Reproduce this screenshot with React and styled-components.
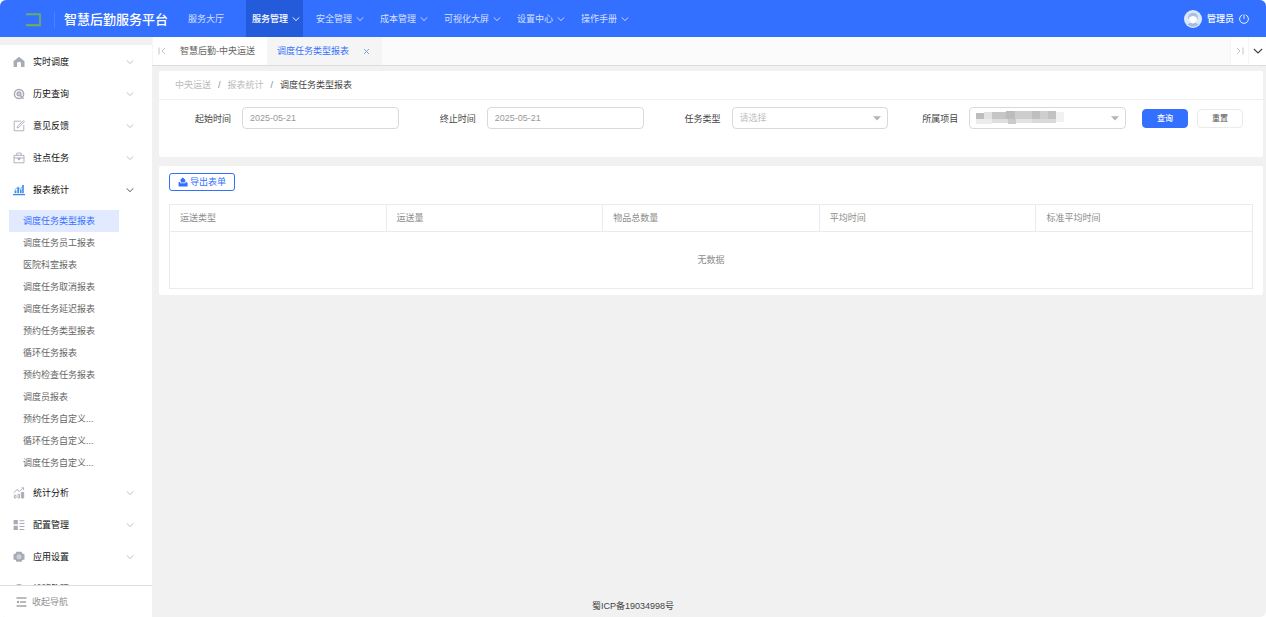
import React from "react";
import styled, { createGlobalStyle } from "styled-components";

const GlobalStyle = createGlobalStyle`
  *, *::before, *::after { box-sizing: border-box; }
  body {
    margin: 0;
    background: #fff;
    color: #333;
    font: 9px/14px "Liberation Sans", "Noto Sans CJK SC", sans-serif;
  }
  button, input, select { font: inherit; margin: 0; }
  button { cursor: pointer; }
  a { color: inherit; text-decoration: none; }
  ul { list-style: none; margin: 0; padding: 0; }
`;

const BLUE = "#3370ff";
const SIDEBAR = "152px";

const Page = styled.div`
  display: flex;
  flex-direction: column;
  height: 100vh;
  border-radius: 6px;
  overflow: hidden;
  background: #f1f1f1;
`;

/* ---------- header ---------- */

const Header = styled.header`
  display: flex;
  align-items: stretch;
  height: 37px;
  flex: none;
  padding: 0 17px 0 24px;
  background: ${BLUE};
  color: #fff;
`;

const Brand = styled.div`
  display: flex;
  align-items: center;
  padding-top: 2px;
  margin-right: 14px;
`;

const BrandDivider = styled.span`
  width: 1px;
  height: 16px;
  margin: 0 9px 0 11px;
  background: rgba(255, 255, 255, 0.12);
`;

const BrandName = styled.h1`
  margin: 0;
  font-size: 13px;
  line-height: 20px;
  font-weight: 500;
  white-space: nowrap;
`;

const TopNav = styled.nav`
  display: flex;
  gap: 7px;
  flex: 1;
`;

const TopLink = styled.a`
  display: flex;
  align-items: center;
  gap: 4px;
  min-width: 57px;
  padding: 0 3px 0 6px;
  white-space: nowrap;
  font-weight: ${(p) => (p.$active ? 500 : 400)};
  color: ${(p) => (p.$active ? "#fff" : "rgba(255, 255, 255, 0.8)")};
  background: ${(p) => (p.$active ? "#245bdb" : "transparent")};
`;

const Account = styled.div`
  display: flex;
  align-items: center;
  gap: 5px;
  font-weight: 500;
  white-space: nowrap;
`;

const PlainButton = styled.button`
  display: flex;
  align-items: center;
  justify-content: center;
  padding: 0;
  border: 0;
  background: transparent;
  color: inherit;
`;

/* ---------- sidebar ---------- */

const Body = styled.div`
  display: flex;
  flex: 1;
  min-height: 0;
`;

const Sidebar = styled.aside`
  display: flex;
  flex-direction: column;
  flex: none;
  width: ${SIDEBAR};
  padding-top: 8px;
`;

const Menu = styled.ul`
  flex: 1;
  min-height: 0;
  padding-top: 1px;
  overflow: hidden;
  background: #fff;
`;

const GroupButton = styled.button`
  display: flex;
  align-items: center;
  gap: 8px;
  width: 100%;
  height: 32px;
  padding: 0 18px 0 13px;
  border: 0;
  background: transparent;
  color: #111;
  text-align: left;
`;

const GroupLabel = styled.span`
  flex: 1;
`;

const SubMenu = styled.ul`
  padding: 4px 33px 3px 9px;
`;

const SubLink = styled.a`
  display: block;
  padding-left: 14px;
  line-height: 22px;
  white-space: nowrap;
  color: ${(p) => (p.$active ? BLUE : "#666")};
  background: ${(p) => (p.$active ? "#e1eaff" : "transparent")};
`;

const Collapse = styled.button`
  display: flex;
  align-items: center;
  gap: 5px;
  flex: none;
  height: 32px;
  padding: 0 16px;
  border: 0;
  border-top: 1px solid #ddd;
  background: #fff;
  color: #8f8f8f;
`;

/* ---------- tabs ---------- */

const Main = styled.main`
  display: flex;
  flex-direction: column;
  flex: 1;
  min-width: 0;
`;

const TabBar = styled.div`
  display: flex;
  flex: none;
  height: 29px;
  border-bottom: 1px solid #dcdcdc;
  background: #fbfbfc;
`;

const TabArrow = styled(PlainButton)`
  width: 18px;
  background: #fff;
  color: ${(p) => (p.$dark ? "#444" : "#c4c4c4")};
  border-left: 1px solid #f6f6f6;
`;

const Tab = styled.div`
  display: flex;
  align-items: center;
  gap: 14px;
  padding: 0 12px 0 10px;
  white-space: nowrap;
  color: ${(p) => (p.$active ? BLUE : "#666")};
  background: ${(p) => (p.$active ? "#f5f5f6" : "#fff")};
`;

const TabSpace = styled.div`
  flex: 1;
`;

/* ---------- content ---------- */

const Content = styled.div`
  display: flex;
  flex-direction: column;
  gap: 9px;
  flex: 1;
  padding: 5px 3px 0 7px;
`;

const Card = styled.section`
  border-radius: 2px;
  background: #fff;
`;

const Breadcrumb = styled.nav`
  display: flex;
  gap: 7px;
  padding: 7px 16px;
  border-bottom: 1px solid #f0f0f0;
  color: #bbb;
`;

const Slash = styled.span`
  color: #888;
`;

const Current = styled.span`
  color: #444;
`;

const Filters = styled.form`
  display: flex;
  align-items: flex-start;
  padding: 7px 20px 26px 36px;
`;

const Field = styled.div`
  display: flex;
  align-items: flex-start;
  gap: 11px;
  flex: 1;
  margin-right: ${(p) => p.$after}px;
`;

const Label = styled.label`
  line-height: 24px;
  white-space: nowrap;
  color: #444;
`;

const Control = styled.div`
  position: relative;
  flex: 1;
  min-width: 0;
`;

const fieldBox = `
  display: block;
  width: 100%;
  height: 22px;
  padding: 0 7px;
  border: 1px solid #d9d9d9;
  border-radius: 4px;
  background: #fff;
  outline: 0;
`;

const TextInput = styled.input`
  ${fieldBox}
  color: #999;
`;

const Select = styled.select`
  ${fieldBox}
  appearance: none;
  color: #c0c0c0;
`;

const Caret = styled.svg`
  position: absolute;
  right: 7px;
  top: 9px;
  pointer-events: none;
`;

const Redacted = styled.svg`
  position: absolute;
  left: 7px;
  top: 4px;
  pointer-events: none;
`;

const Actions = styled.div`
  display: flex;
  gap: 9px;
  padding: 2px 0 3px;
`;

const ActionButton = styled.button`
  width: 46px;
  height: 19px;
  padding: 0;
  border: 1px solid ${(p) => (p.$primary ? BLUE : "#ebebeb")};
  border-radius: 4px;
  background: ${(p) => (p.$primary ? BLUE : "#fff")};
  color: ${(p) => (p.$primary ? "#fff" : "#555")};
  font-size: 8px;
  line-height: 12px;
  font-weight: ${(p) => (p.$primary ? 500 : 400)};
`;

const ReportCard = styled(Card)`
  padding: 7px 10px 6px;
`;

const ExportButton = styled.button`
  display: flex;
  align-items: center;
  justify-content: center;
  gap: 2px;
  width: 66px;
  height: 18px;
  padding: 0;
  margin-bottom: 13px;
  border: 1px solid ${BLUE};
  border-radius: 3px;
  background: #fff;
  color: ${BLUE};
`;

const Table = styled.table`
  width: 100%;
  table-layout: fixed;
  border-collapse: collapse;
  color: #8c8c8c;
`;

const Th = styled.th`
  height: 27px;
  padding: 0 10px;
  border: 1px solid #ebebeb;
  text-align: left;
  font-weight: 400;
`;

const Empty = styled.td`
  height: 57px;
  padding: 0;
  border: 1px solid #ebebeb;
  text-align: center;
`;

const Footer = styled.footer`
  flex: none;
  padding: 0 ${SIDEBAR} 4px 0;
  text-align: center;
  color: #444;
`;

/* ---------- drawings ---------- */

const Chevron = ({ w = 8, color = "currentColor" }) => (
  <svg width={w} height={w} viewBox="0 0 8 8" fill="none" stroke={color} strokeWidth="0.9" aria-hidden="true">
    <path d="M0.7 2.4 4 5.6 7.3 2.4" />
  </svg>
);

const EdgeArrow = ({ flip }) => (
  <svg width="8" height="8" viewBox="0 0 8 8" fill="none" stroke="currentColor" strokeWidth="1" aria-hidden="true">
    <path d={flip ? "M1 1 4 4 1 7M7 0.5V7.5" : "M7 1 4 4 7 7M1 0.5V7.5"} />
  </svg>
);

const Logo = () => (
  <svg width="19" height="16" viewBox="0 0 19 16" fill="none" aria-hidden="true">
    <path d="M2 2.2H16V13.2H2" stroke="#66ad68" strokeWidth="1.9" />
    <path d="M2 13.2H16" stroke="#7fa850" strokeWidth="1.4" />
  </svg>
);

const Avatar = () => (
  <svg width="18" height="18" viewBox="0 0 18 18" aria-hidden="true">
    <circle cx="9" cy="9" r="9" fill="#dce8fb" />
    <path d="M3.5 14.5Q9 10 14.5 14.5A8 8 0 0 1 3.5 14.5" fill="#a4bbe2" />
    <path d="M4 9Q3.5 3 9 2.8T14 9Z" fill="#a9bfe6" />
    <path d="M5.2 7.5Q9 4.5 12.8 7.5V10Q11 13.5 9 13.5T5.2 10Z" fill="#fff" />
  </svg>
);

const Power = () => (
  <svg width="10" height="10" viewBox="0 0 10 10" fill="none" stroke="currentColor" strokeWidth="0.9" aria-hidden="true">
    <path d="M3.3 0.9A4.4 4.4 0 1 0 6.7 0.9M5 0.5V4.8" />
  </svg>
);

const G = "#a7abb8";
const icons = {
  home: <path d="M0.5 5.2 6 0.7 11.5 5.2V11H8V7.2Q8 5.7 6 5.7T4 7.2V11H0.7Z" fill={G} />,
  history: (
    <g fill="none" stroke={G}>
      <circle cx="6" cy="6" r="4.6" strokeWidth="1.5" />
      <circle cx="6" cy="5.8" r="2" strokeWidth="1.3" fill="#c9ccd6" />
      <path d="M7.4 7.4 10.6 10.8" strokeWidth="1.4" />
    </g>
  ),
  feedback: (
    <g fill="none" stroke={G} strokeWidth="0.9">
      <path d="M8 1.2H1.2V10.8H10.8V5" />
      <path d="M4.2 8 4.6 6.2 10.4 0.7 11.4 1.7 5.8 7.4Z" />
    </g>
  ),
  task: (
    <g fill="none" stroke={G} strokeWidth="0.9">
      <path d="M1 3.4H11V10.8H1ZM3.8 3.4V1.1H8.2V3.4M1 6H11" />
      <path d="M4.7 6.2H7.3L6 8.2Z" fill={G} />
    </g>
  ),
  report: (
    <g fill="#3b8bea">
      <path d="M0 10H12V11.3H0ZM1.6 6.4H3.4V9.3H1.6ZM4.3 3.7H6.1V9.3H4.3ZM7 5.6H8.6V9.3H7ZM9.2 1H10.8V9.3H9.2Z" />
      <path d="M1.6 6 5.1 2.8 7.6 5.2 10 1.5" fill="none" stroke="#3b8bea" strokeWidth="0.7" />
    </g>
  ),
  analysis: (
    <g fill="none" stroke={G} strokeWidth="0.9">
      <path d="M0.6 5.8 4 2.6 6.3 4.5 10.5 0.8M8.5 0.8H10.6V3M1.4 8.2H3V11H1.4ZM5 7.2H6.5V11H5Z" />
      <path d="M8.4 5.4H10.7V11H8.4Z" fill={G} />
    </g>
  ),
  config: (
    <path
      d="M0.6 1H4.8V5.2H0.6ZM0.6 6.8H4.8V11H0.6ZM6.5 1.2H11.4V2.2H6.5ZM6.5 4H11.4V5H6.5ZM6.5 7H11.4V8H6.5ZM6.5 9.9H11.4V10.9H6.5Z"
      fill={G}
    />
  ),
  settings: (
    <g>
      <path d="M3.4 0.8H8.6L9.3 2.5 11.5 3.2V8.4L9.3 9 8.6 10.8H3.4L2.7 9 0.5 8.4V3.2L2.7 2.5Z" fill={G} />
      <circle cx="6" cy="5.8" r="2" fill="#c4c7d2" stroke="#e6e7ec" strokeWidth="0.7" />
    </g>
  ),
  other: <circle cx="6" cy="6" r="5" fill={G} />,
};

const MenuIcon = ({ name }) => (
  <svg width="12" height="12" viewBox="0 0 12 12" aria-hidden="true">
    {icons[name]}
  </svg>
);

const CollapseIcon = () => (
  <svg width="11" height="10" viewBox="0 0 11 10" fill="none" stroke="#777" strokeWidth="1" aria-hidden="true">
    <path d="M0.5 1H10.5M4 5H10M0.5 9H10.5" />
    <path d="M2.6 3.4V6.6L0.6 5Z" fill="#777" stroke="none" />
  </svg>
);

const ExportIcon = () => (
  <svg width="10" height="10" viewBox="0 0 10 10" fill={BLUE} aria-hidden="true">
    <path d="M4.8 0.6 8 3.6H6.9V5.6H2.8V3.6H1.6Z" />
    <path d="M0.6 5H2.2V6.3H7.5V4.6L9.6 6V9.4H0.6Z" />
  </svg>
);

const SelectCaret = () => (
  <Caret width="8" height="5" viewBox="0 0 8 5" aria-hidden="true">
    <path d="M0 0.3H8L4 4.6Z" fill="#b5b5b5" />
  </Caret>
);

const mosaic = [
  [0, 2, 8, 6, "#bdbdbd"], [0, 8, 16, 5, "#ececec"], [8, 1, 8, 7, "#e2e2e2"],
  [16, 1, 14, 7, "#c6c6c6"], [16, 8, 16, 4, "#dedede"], [30, 0, 9, 8, "#bcbcbc"],
  [32, 8, 8, 5, "#cacaca"], [39, 0, 17, 8, "#cdcdcd"], [40, 8, 16, 4, "#e2e2e2"],
  [56, 0, 8, 8, "#bfbfbf"], [56, 8, 24, 4, "#dadada"], [64, 0, 8, 8, "#cecece"],
  [72, 0, 8, 8, "#c2c2c2"], [80, 1, 8, 10, "#f1f1f1"],
];

/* ---------- data ---------- */

const topLinks = ["安全管理", "成本管理", "可视化大屏", "设置中心", "操作手册"];

const reports = [
  "调度任务类型报表", "调度任务员工报表", "医院科室报表", "调度任务取消报表",
  "调度任务延迟报表", "预约任务类型报表", "循环任务报表", "预约检查任务报表",
  "调度员报表", "预约任务自定义...", "循环任务自定义...", "调度任务自定义...",
];

const groups = [
  { label: "实时调度", icon: "home" },
  { label: "历史查询", icon: "history" },
  { label: "意见反馈", icon: "feedback" },
  { label: "驻点任务", icon: "task" },
  { label: "报表统计", icon: "report", children: reports },
  { label: "统计分析", icon: "analysis" },
  { label: "配置管理", icon: "config" },
  { label: "应用设置", icon: "settings" },
  { label: "排班管理", icon: "other" },
];

const columns = ["运送类型", "运送量", "物品总数量", "平均时间", "标准平均时间"];

export default function App() {
  return (
    <Page lang="zh-CN">
      <GlobalStyle />
      <Header>
        <Brand>
          <Logo />
          <BrandDivider />
          <BrandName>智慧后勤服务平台</BrandName>
        </Brand>
        <TopNav>
          <TopLink href="#hall">服务大厅</TopLink>
          <TopLink href="#service" $active>
            服务管理
            <Chevron />
          </TopLink>
          {topLinks.map((t) => (
            <TopLink key={t} href="#nav">
              {t}
              <Chevron />
            </TopLink>
          ))}
        </TopNav>
        <Account>
          <Avatar />
          管理员
          <PlainButton type="button" aria-label="退出">
            <Power />
          </PlainButton>
        </Account>
      </Header>

      <Body>
        <Sidebar>
          <Menu>
            {groups.map((g) => (
              <li key={g.label}>
                <GroupButton type="button" aria-expanded={!!g.children}>
                  <MenuIcon name={g.icon} />
                  <GroupLabel>{g.label}</GroupLabel>
                  <Chevron color={g.children ? "#444" : "#bbb"} />
                </GroupButton>
                {g.children && (
                  <SubMenu>
                    {g.children.map((c, i) => (
                      <li key={c}>
                        <SubLink href="#report" $active={i === 0}>{c}</SubLink>
                      </li>
                    ))}
                  </SubMenu>
                )}
              </li>
            ))}
          </Menu>
          <Collapse type="button">
            <CollapseIcon />
            收起导航
          </Collapse>
        </Sidebar>

        <Main>
          <TabBar>
            <TabArrow type="button" aria-label="向左"><EdgeArrow /></TabArrow>
            <Tab>
              <a href="#central">智慧后勤-中央运送</a>
            </Tab>
            <Tab $active>
              <a href="#report">调度任务类型报表</a>
              <PlainButton type="button" aria-label="关闭">
                <svg width="7" height="7" viewBox="0 0 7 7" stroke="#7d9be0" strokeWidth="0.9" aria-hidden="true">
                  <path d="M1 1 6 6M6 1 1 6" />
                </svg>
              </PlainButton>
            </Tab>
            <TabSpace />
            <TabArrow type="button" aria-label="向右"><EdgeArrow flip /></TabArrow>
            <TabArrow type="button" aria-label="更多" $dark><Chevron w={10} /></TabArrow>
          </TabBar>

          <Content>
            <Card>
              <Breadcrumb>
                <a href="#central">中央运送</a>
                <Slash>/</Slash>
                <a href="#stats">报表统计</a>
                <Slash>/</Slash>
                <Current>调度任务类型报表</Current>
              </Breadcrumb>
              <Filters onSubmit={(e) => e.preventDefault()}>
                <Field $after={41}>
                  <Label htmlFor="start">起始时间</Label>
                  <Control><TextInput id="start" defaultValue="2025-05-21" /></Control>
                </Field>
                <Field $after={41}>
                  <Label htmlFor="end">终止时间</Label>
                  <Control><TextInput id="end" defaultValue="2025-05-21" /></Control>
                </Field>
                <Field $after={34}>
                  <Label htmlFor="type">任务类型</Label>
                  <Control>
                    <Select id="type"><option>请选择</option></Select>
                    <SelectCaret />
                  </Control>
                </Field>
                <Field $after={16}>
                  <Label htmlFor="project">所属项目</Label>
                  <Control>
                    <Select id="project"><option value="" aria-label="所属项目" /></Select>
                    <Redacted width="88" height="13" viewBox="0 0 88 13" aria-hidden="true">
                      {mosaic.map(([x, y, w, h, c]) => (
                        <rect key={`${x}-${y}`} x={x} y={y} width={w} height={h} fill={c} />
                      ))}
                    </Redacted>
                    <SelectCaret />
                  </Control>
                </Field>
                <Actions>
                  <ActionButton type="submit" $primary>查询</ActionButton>
                  <ActionButton type="reset">重置</ActionButton>
                </Actions>
              </Filters>
            </Card>

            <ReportCard>
              <ExportButton type="button">
                <ExportIcon />
                导出表单
              </ExportButton>
              <Table>
                <thead>
                  <tr>{columns.map((c) => <Th key={c} scope="col">{c}</Th>)}</tr>
                </thead>
                <tbody>
                  <tr><Empty colSpan={columns.length}>无数据</Empty></tr>
                </tbody>
              </Table>
            </ReportCard>
          </Content>
          <Footer>蜀ICP备19034998号</Footer>
        </Main>
      </Body>
    </Page>
  );
}
